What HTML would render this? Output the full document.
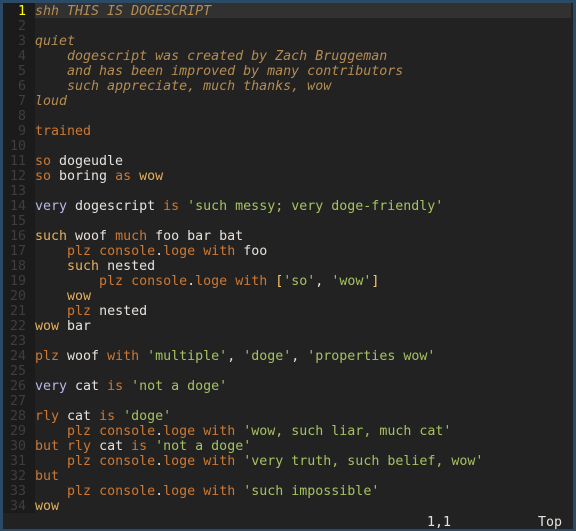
<!DOCTYPE html>
<html><head><meta charset="utf-8"><style>
html,body{margin:0;padding:0;background:#1f3a55;}
#w{position:absolute;left:0;top:0;width:576px;height:531px;background:#2b4a66;overflow:hidden}
#ed{position:absolute;left:3px;top:3px;width:570px;height:526px;background:#222222}
#gut{position:absolute;left:0;top:0;width:32px;height:510px;background:#1b1b1b}
#cl{position:absolute;left:32px;top:0;width:536px;height:15px;background:#313131}
pre{margin:0;position:absolute;font-family:"DejaVu Sans Mono","Liberation Mono",monospace;font-size:13.3px;line-height:15px;white-space:pre}
#nums{left:0;top:1px;width:23px;text-align:right;color:#3e3e3e}
#code{left:32px;top:1px;color:#e6e1dc}
.c{color:#b58c52;font-style:italic}
.k{color:#cc7833}
.s{color:#e6b05c}
.v{color:#b8b8e8}
.g{color:#a5c261}
.y{color:#ffc66d}
.n{color:#ffff00}
#st{left:424px;top:512px;color:#e6e1dc}
#st2{left:535px;top:512px;color:#e6e1dc}
</style></head><body><div id="w"><div id="ed">
<div id="gut"></div><div id="cl"></div>
<pre id="nums"><span class="n">1</span>
2
3
4
5
6
7
8
9
10
11
12
13
14
15
16
17
18
19
20
21
22
23
24
25
26
27
28
29
30
31
32
33
34</pre>
<pre id="code"><span class="c">shh THIS IS DOGESCRIPT</span>

<span class="c">quiet</span>
<span class="c">    dogescript was created by Zach Bruggeman</span>
<span class="c">    and has been improved by many contributors</span>
<span class="c">    such appreciate, much thanks, wow</span>
<span class="c">loud</span>

<span class="k">trained</span>

<span class="k">so</span> dogeudle
<span class="k">so</span> boring <span class="k">as</span> <span class="s">wow</span>

<span class="v">very</span> dogescript <span class="k">is</span> <span class="g">'such messy; very doge-friendly'</span>

<span class="s">such</span> woof <span class="k">much</span> foo bar bat
    <span class="k">plz</span> <span class="k">console</span>.<span class="k">loge</span> <span class="k">with</span> foo
    <span class="s">such</span> nested
        <span class="k">plz</span> <span class="k">console</span>.<span class="k">loge</span> <span class="k">with</span> <span class="y">[</span><span class="g">'so'</span>, <span class="g">'wow'</span><span class="y">]</span>
    <span class="s">wow</span>
    <span class="k">plz</span> nested
<span class="s">wow</span> bar

<span class="k">plz</span> woof <span class="k">with</span> <span class="g">'multiple'</span>, <span class="g">'doge'</span>, <span class="g">'properties wow'</span>

<span class="v">very</span> cat <span class="k">is</span> <span class="g">'not a doge'</span>

<span class="k">rly</span> cat <span class="k">is</span> <span class="g">'doge'</span>
    <span class="k">plz</span> <span class="k">console</span>.<span class="k">loge</span> <span class="k">with</span> <span class="g">'wow, such liar, much cat'</span>
<span class="k">but</span> <span class="k">rly</span> cat <span class="k">is</span> <span class="g">'not a doge'</span>
    <span class="k">plz</span> <span class="k">console</span>.<span class="k">loge</span> <span class="k">with</span> <span class="g">'very truth, such belief, wow'</span>
<span class="k">but</span>
    <span class="k">plz</span> <span class="k">console</span>.<span class="k">loge</span> <span class="k">with</span> <span class="g">'such impossible'</span>
<span class="s">wow</span></pre>
<pre id="st">1,1</pre><pre id="st2">Top</pre>
</div></div></body></html>
